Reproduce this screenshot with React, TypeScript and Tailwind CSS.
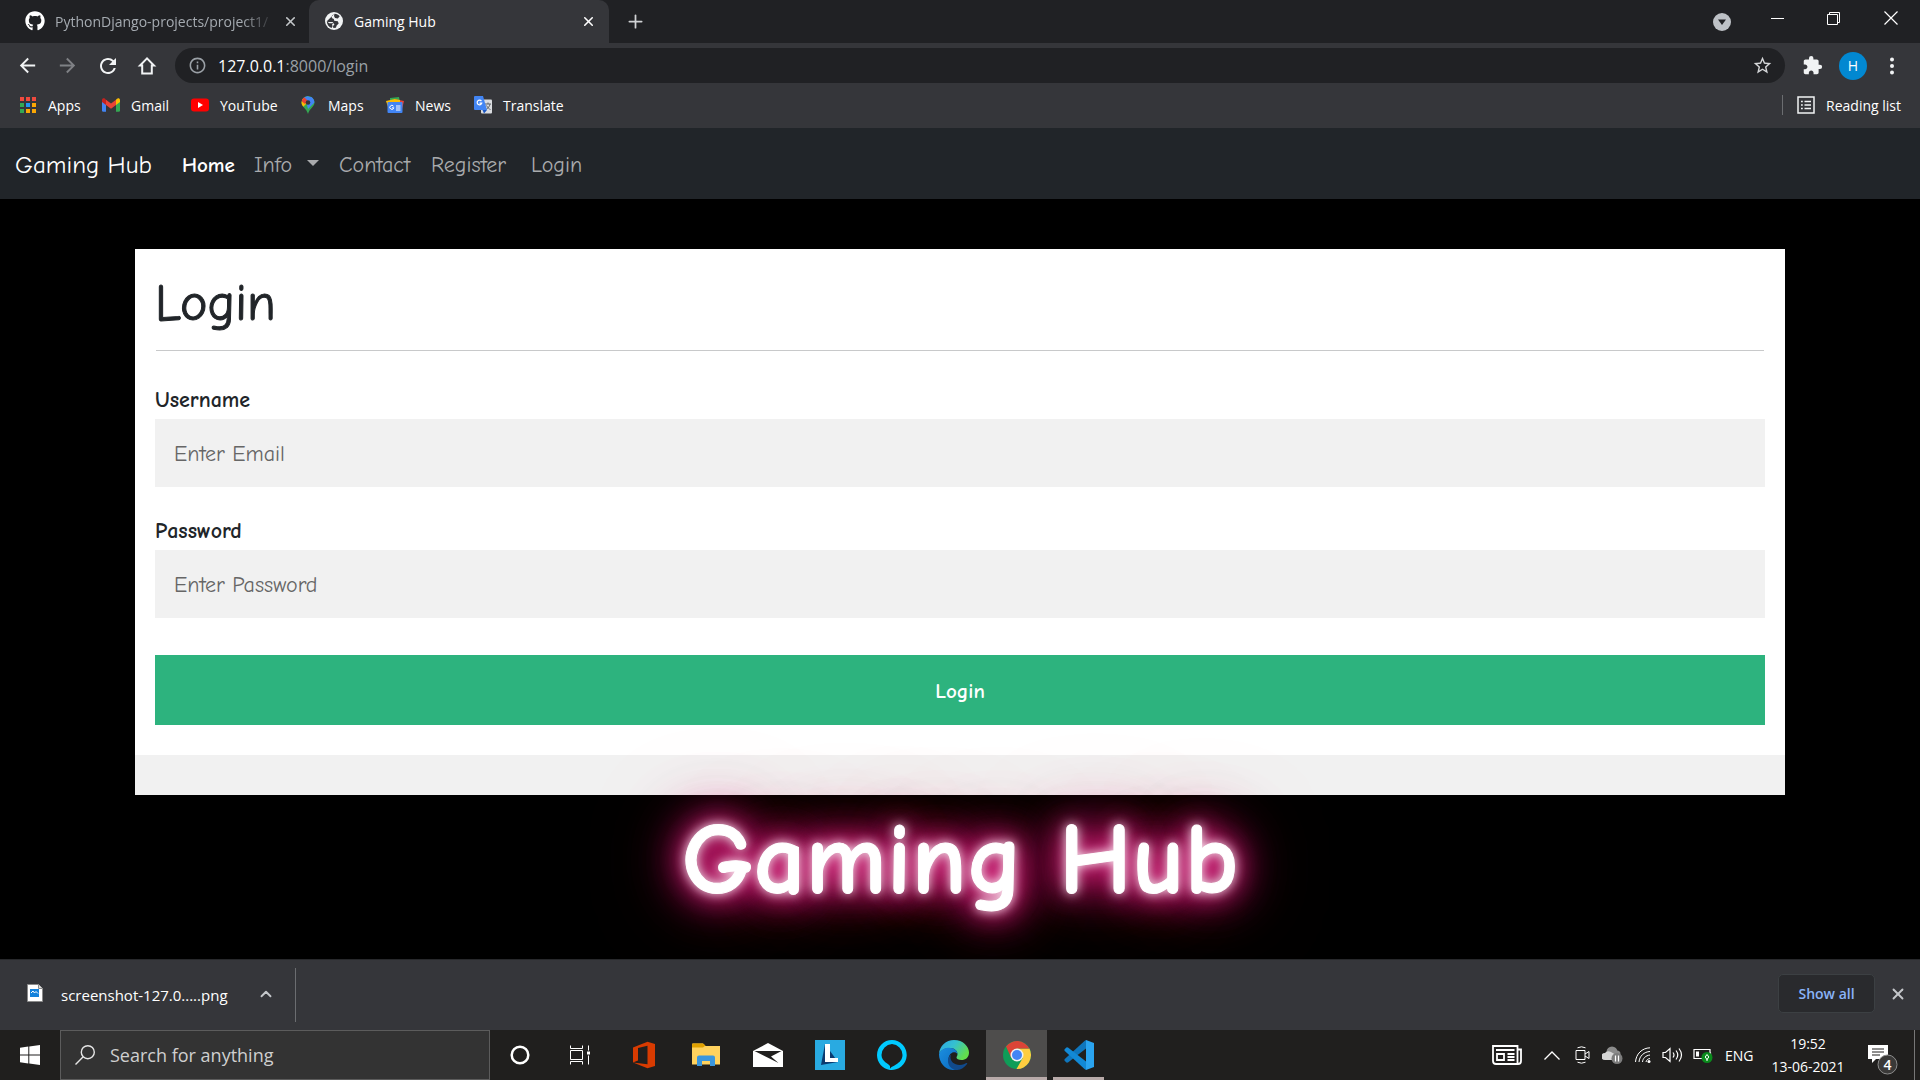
import React, { type ReactNode } from "react";
import { FaGithub } from "react-icons/fa";
import {
  MdArrowBack,
  MdArrowForward,
  MdExtension,
  MdInfoOutline,
  MdRefresh,
  MdStarBorder,
} from "react-icons/md";
import { ChevronUp, Plus, X } from "lucide-react";

const uiFont = "font-['Segoe_UI','Open_Sans','Noto_Sans',sans-serif]";
const siteFont = "font-['Comic_Neue',Lato,sans-serif]";

function IconButton({ label, className, children }: { label: string; className?: string; children: ReactNode }) {
  return (
    <button type="button" aria-label={label} className={`flex shrink-0 items-center justify-center ${className ?? ""}`}>
      {children}
    </button>
  );
}

function GlobeIcon() {
  return (
    <svg viewBox="0 0 18 18" className="size-[18px]">
      <circle cx="9" cy="9" r="9" fill="#f1f3f4" />
      <path
        d="M9.500 1.800 7 3.500 6.800 6l2 1 .4 1.800 3.600.4.900 2.300-2 2-.8 2.200-2.600.4-.3-2 1.500-1.500-1.600-1.400-3.700.1L1.800 9.200C1.900 12.500 3.800 15 6.500 16l1-1.500-.4-2.200L9 11.500 7.500 10H3.300L1.800 9.200M9.500 1.800c2.300.1 4 1 5.200 2.500L12.800 6.500 10 6l-1-2z"
        fill="#35363a"
      />
    </svg>
  );
}

function TabStrip() {
  return (
    <header className="flex h-[43px] items-stretch bg-[#202124] text-[#9aa0a6]">
      <div className="flex w-[309px] items-center pb-px pl-[25px]">
        <FaGithub className="size-5 shrink-0 text-white" />
        <span className="ml-[10px] w-[220px] overflow-hidden whitespace-nowrap text-[14px] text-[#a5abb1] [mask-image:linear-gradient(to_right,black_85%,transparent)]">
          PythonDjango-projects/project1/
        </span>
        <IconButton label="Close tab" className="ml-[8px] text-[#c4c7ca]">
          <X size={15} strokeWidth={2.5} />
        </IconButton>
      </div>
      <div className="flex w-[300px] items-center rounded-t-[10px] bg-[#35363a] pb-px pl-4 text-white">
        <GlobeIcon />
        <span className="ml-[11px] flex-1 text-[14px]">Gaming Hub</span>
        <IconButton label="Close tab" className="mr-[13px]">
          <X size={15} strokeWidth={2.5} />
        </IconButton>
      </div>
      <IconButton label="New tab" className="ml-4 pb-px text-[#d0d2d4]">
        <Plus size={21} strokeWidth={2} />
      </IconButton>
      <div className="ml-auto flex items-center text-white">
        <IconButton label="Search tabs" className="mr-[18px]">
          <svg viewBox="0 0 18 18" className="size-[18px]">
            <circle cx="9" cy="9" r="9" fill="#bdc1c6" />
            <path d="M5 6.500h8L9 12z" fill="#202124" />
          </svg>
        </IconButton>
        <IconButton label="Minimise" className="h-9 w-[56px] self-start">
          <svg viewBox="0 0 13 13" className="size-[13px]"><path d="M0 6.500h13" stroke="currentColor" /></svg>
        </IconButton>
        <IconButton label="Restore" className="h-9 w-[57px] self-start">
          <svg viewBox="0 0 13 13" className="size-[13px]" fill="none" stroke="currentColor">
            <path d="M.5 2.500h10v10H.5zM2.500 2.500v-2h10v10h-2" />
          </svg>
        </IconButton>
        <IconButton label="Close window" className="h-9 w-[58px] self-start">
          <svg viewBox="0 0 14 14" className="size-[14px]" stroke="currentColor" strokeWidth="1.200">
            <path d="m.5.5 13 13m0-13-13 13" />
          </svg>
        </IconButton>
      </div>
    </header>
  );
}

function Toolbar() {
  return (
    <div className="flex h-[45px] items-center bg-[#35363a] pl-[7px] text-[#f1f3f4]">
      <IconButton label="Back" className="w-10"><MdArrowBack size={23} /></IconButton>
      <IconButton label="Forward" className="w-10 text-[#7f8185]"><MdArrowForward size={23} /></IconButton>
      <IconButton label="Reload" className="w-10 pl-px"><MdRefresh size={24} /></IconButton>
      <IconButton label="Home" className="w-10">
        <svg viewBox="0 0 20 20" className="size-5" fill="none" stroke="currentColor" strokeWidth="2">
          <path d="M10 2.400 3 9.500h2.200V17.500h9.600V9.500H17z" />
        </svg>
      </IconButton>
      <div className="ml-2 flex h-[35px] flex-1 items-center rounded-full bg-[#202124] pl-[13px] pr-[12px]">
        <MdInfoOutline size={19} className="text-[#9aa0a6]" />
        <div role="textbox" aria-label="Address" className="ml-[11px] flex-1 text-[16px] text-[#9aa0a6]">
          <span className="text-white">127.0.0.1</span>:8000/login
        </div>
        <IconButton label="Bookmark this page"><MdStarBorder size={21} className="text-[#d5d7d9]" /></IconButton>
      </div>
      <IconButton label="Extensions" className="ml-[17px]"><MdExtension size={21} /></IconButton>
      <IconButton label="Profile" className="ml-[16px] size-7 rounded-full bg-[#0288d1] text-[14px] text-white">H</IconButton>
      <IconButton label="Menu" className="mr-[18px] ml-[15px] w-5">
        <svg viewBox="0 0 4 18" className="h-[18px] w-1" fill="currentColor">
          <circle cx="2" cy="2.500" r="2" /><circle cx="2" cy="9" r="2" /><circle cx="2" cy="15.500" r="2" />
        </svg>
      </IconButton>
    </div>
  );
}

const appDots = ["#f04a3e", "#f04a3e", "#f04a3e", "#34a853", "#2196f3", "#fba704", "#34a853", "#fba704", "#fba704"];

const bookmarks: { label: string; width: string; icon: ReactNode }[] = [
  {
    label: "Apps",
    width: "w-[83px]",
    icon: (
      <svg viewBox="0 0 18 18" className="size-[18px]">
        {appDots.map((c, i) => (
          <rect key={i} x={1 + (i % 3) * 6} y={1 + Math.floor(i / 3) * 6} width="4" height="4" fill={c} />
        ))}
      </svg>
    ),
  },
  {
    label: "Gmail",
    width: "w-[89px]",
    icon: (
      <svg viewBox="0 0 18 18" className="size-[18px]">
        <path d="M0 4v10.500q0 1.300 1.300 1.300H4V8z" fill="#4285f4" />
        <path d="M18 4v10.500q0 1.300-1.300 1.300H14V8z" fill="#34a853" />
        <path d="M14 3.800V9l4-3V4.200c0-2-2-2.500-3-1.400z" fill="#fbbc04" />
        <path d="M0 4.200V6l4 3V3.800L3 2.800C1.800 1.900 0 2.400 0 4.200z" fill="#c5221f" />
        <path d="m4 3.700 5 3.800 5-3.800V9l-5 3.800L4 9z" fill="#ea4335" />
      </svg>
    ),
  },
  {
    label: "YouTube",
    width: "w-[108px]",
    icon: (
      <svg viewBox="0 0 18 18" className="size-[18px]">
        <rect y="2.500" width="18" height="13" rx="3" fill="#f00" />
        <path d="m7 6 5 3-5 3z" fill="#fff" />
      </svg>
    ),
  },
  {
    label: "Maps",
    width: "w-[87px]",
    icon: (
      <svg viewBox="0 0 18 18" className="size-[18px]">
        <defs>
          <clipPath id="pin"><path d="M9 0a6.500 6.500 0 0 0-6.500 6.500c0 4.500 4.800 5.500 6.500 11.500 1.700-6 6.500-7 6.500-11.500A6.500 6.500 0 0 0 9 0z" /></clipPath>
        </defs>
        <g clipPath="url(#pin)">
          <path d="M0 0h18v18H0z" fill="#34a853" />
          <path d="m9 6.500 4.500-5L8 0 4 2z" fill="#4285f4" />
          <path d="M12.500 0H18v4L9 13l-1-4z" fill="#4285f4" />
          <path d="M0 2h5l4 4-7 7H0z" fill="#fbbc04" />
          <path d="M0 0h4l5 5-3 3L1 4z" fill="#ea4335" />
        </g>
        <circle cx="9" cy="6.500" r="2.300" fill="#35363a" />
      </svg>
    ),
  },
  {
    label: "News",
    width: "w-[88px]",
    icon: (
      <svg viewBox="0 0 18 18" className="size-[18px]">
        <path d="m4 2 9-1 1 5H4z" fill="#34a853" />
        <path d="m0 5 9-2 1 6-8 2z" fill="#fbbc04" />
        <path d="m8 3 10 2-2 8-8-3z" fill="#ea4335" />
        <path d="m8 3 6 1v4H8z" fill="#fbbc04" />
        <rect x="1.500" y="6" width="15" height="11" rx="1" fill="#4285f4" />
        <path d="M7.500 10.200a2 2 0 1 0 .3 1.600H6M10 10h4.500M10 12h4.500M10 14h4.500" stroke="#fff" fill="none" />
      </svg>
    ),
  },
  {
    label: "Translate",
    width: "w-[100px]",
    icon: (
      <svg viewBox="0 0 18 18" className="size-[18px]">
        <rect x="7" y="3.500" width="11" height="14" rx="1" fill="#dadce0" />
        <path d="M11 8h6M14 6.500V8m2 0c-.5 2.500-2 4.500-4 5.500M12.500 9.500c1 2 2.500 3.500 4 4" stroke="#5f6368" fill="none" />
        <path d="M1 0h8l4 14H1q-1 0-1-1V1q0-1 1-1z" fill="#4285f4" />
        <path d="M8.500 14H13l-3 3.500z" fill="#1a56c4" />
        <path d="M7.400 5.200a2.300 2.300 0 1 0 .3 2H5.500" stroke="#fff" strokeWidth="1.200" fill="none" />
      </svg>
    ),
  },
];

function BookmarksBar() {
  return (
    <nav aria-label="Bookmarks" className="flex h-10 items-center bg-[#35363a] pb-[6px] pl-[19px] text-[14px] text-white">
      {bookmarks.map((b) => (
        <a key={b.label} href="#" className={`flex shrink-0 items-center gap-[11px] whitespace-nowrap ${b.width}`}>
          {b.icon}
          {b.label}
        </a>
      ))}
      <a href="#" className="mr-[19px] ml-auto flex items-center gap-[11px] whitespace-nowrap">
        <span className="mr-[3px] h-5 w-px bg-[#6b6d70]" />
        <svg viewBox="0 0 18 18" className="size-[18px]" fill="none" stroke="#f1f3f4" strokeWidth="1.500">
          <rect x="1" y="1" width="16" height="16" />
          <path d="M4 5.500h1.800M7.500 5.500H14M4 9h1.800M7.500 9H14M4 12.500h1.800M7.500 12.500H14" />
        </svg>
        Reading list
      </a>
    </nav>
  );
}

function SiteNav() {
  return (
    <nav aria-label="Site" className={`flex h-[71px] items-center bg-[#212529] pt-[3px] pl-[15px] text-[22px] leading-8 text-[#a9abad] ${siteFont}`}>
      <a href="#" className="w-[167px] text-[25px] whitespace-nowrap text-white">Gaming Hub</a>
      <a href="#" className="w-[72px] text-[21px] font-bold text-white">Home</a>
      <button type="button" className="flex w-[85px] items-center gap-[15px]">
        Info
        <svg viewBox="0 0 12 6" className="mb-1 h-[6px] w-3" fill="currentColor"><path d="M0 0h12L6 6z" /></svg>
      </button>
      <a href="#" className="w-[92px]">Contact</a>
      <a href="#" className="w-[100px]">Register</a>
      <a href="#">Login</a>
    </nav>
  );
}

function Field({ id, label, type, placeholder }: { id: string; label: string; type: string; placeholder: string }) {
  return (
    <div className="mb-7 flex flex-col">
      <label htmlFor={id} className="mb-[3px] text-[22px] leading-8 font-bold">{label}</label>
      <input
        id={id}
        type={type}
        placeholder={placeholder}
        className="h-[68px] w-full bg-[#f1f1f1] px-[19px] pt-[2px] text-[22px] outline-none placeholder:text-[#666]"
      />
    </div>
  );
}

function LoginPage() {
  return (
    <main className={`flex flex-1 flex-col overflow-hidden bg-black pt-[50px] text-[#212529] ${siteFont}`}>
      <form className="mx-[135px] bg-white" onSubmit={(e) => e.preventDefault()}>
        <div className="px-5 pt-6 pb-[30px]">
          <h1 className="text-[52px] leading-[60px] [-webkit-text-stroke:1px_#212529]">Login</h1>
          <hr className="mx-px mt-[17px] mb-[33px] border-[#c8c9ca]" />
          <Field id="username" label="Username" type="text" placeholder="Enter Email" />
          <Field id="password" label="Password" type="password" placeholder="Enter Password" />
          <button type="submit" className="mt-[9px] h-[70px] w-full bg-[#2db37e] pt-1 text-[21px] font-bold text-white">Login</button>
        </div>
        <div className="h-10 bg-[#f1f1f1]" />
      </form>
      <h2 className="relative text-center text-[102px] leading-[130px] font-bold whitespace-nowrap text-white [-webkit-text-stroke:1px_#fff] [text-shadow:0_0_12px_#fff,0_0_26px_#ff4da6,0_0_38px_#e60073,0_0_50px_#e60073b0,0_0_66px_#e60073b0,0_0_90px_#e60073a0]">
        Gaming Hub
      </h2>
    </main>
  );
}

function DownloadShelf() {
  return (
    <aside aria-label="Downloads" className="relative flex h-[71px] items-center border-t border-[#28292c] bg-[#35363a] text-white">
      <button type="button" className="flex items-center pl-[27px] text-[15px]">
        <svg viewBox="0 0 16 18" className="mb-1 h-[18px] w-4">
          <path d="M.5.500h11l4 4v13H.500z" fill="#fff" stroke="#8a8a8a" />
          <path d="M11.500.500v4h4" fill="#ddd" stroke="#8a8a8a" />
          <rect x="3" y="5" width="9" height="8" fill="#1482dc" />
          <path d="m4 9 2-2 1.500 2L9 7.500l2 2" stroke="#fff" fill="none" />
        </svg>
        <span className="ml-[18px] w-[178px] text-left whitespace-nowrap">screenshot-127.0.....png</span>
      </button>
      <IconButton label="Download options" className="ml-[18px] pb-[2px] text-[#c4c7ca]"><ChevronUp size={18} strokeWidth={2.5} /></IconButton>
      <span className="ml-[20px] h-[54px] w-px bg-[#6b6d70]" />
      <button type="button" className="mb-[3px] ml-auto h-[39px] w-[97px] rounded-[5px] border border-[#3c4043] bg-[#292a2d] text-[14px] font-semibold text-[#8ab4f8]">
        Show all
      </button>
      <IconButton label="Close downloads" className="mr-[13px] mb-[3px] ml-[14px] text-[#c4c7ca]"><X size={18} strokeWidth={2.5} /></IconButton>
    </aside>
  );
}

const taskbarApps: { label: string; cell: string; icon: ReactNode }[] = [
  {
    label: "Cortana",
    cell: "w-[62px] pr-[2px]",
    icon: <svg viewBox="0 0 20 20" className="size-5"><circle cx="10" cy="10" r="8.300" fill="none" stroke="#fff" strokeWidth="2.500" /></svg>,
  },
  {
    label: "Task View",
    cell: "w-[62px] pr-[6px]",
    icon: (
      <svg viewBox="0 0 20 20" className="size-5" fill="none" stroke="#fff">
        <path d="M.5.500v3h12v-3M.5 19.500v-3h12v3M.5 5.500h12v9H.5zM18.500.500v5M18.500 10.500v9" />
        <path d="M17 6.500h3v3h-3z" fill="#fff" stroke="none" />
      </svg>
    ),
  },
  {
    label: "Office",
    cell: "w-[62px] pr-[2px]",
    icon: (
      <svg viewBox="0 0 24 28" className="h-7 w-6">
        <path d="M1 21.500V6.500L15.500.800 23 3v22l-7.500 2.200L1 21.500l14.500 1.800V4.800L6 7v12.500z" fill="#d83b01" />
      </svg>
    ),
  },
  {
    label: "File Explorer",
    cell: "w-[62px] pr-[2px]",
    icon: (
      <svg viewBox="0 0 28 24" className="h-6 w-7">
        <path d="M0 1.500Q0 .500 1 .500h10l2.500 2.500H28v18.500H0z" fill="#ffd25e" />
        <path d="M0 1.500Q0 .500 1 .500h10l2.500 2-2.500 2H0z" fill="#e0a100" />
        <path d="M5 23V14.500Q5 12.500 7 12.500h14q2 0 2 2V23h-5v-5h-8v5z" fill="#3a96dd" />
      </svg>
    ),
  },
  {
    label: "Mail",
    cell: "w-[62px] pr-[2px]",
    icon: (
      <svg viewBox="0 0 30 24" className="h-6 w-[30px]">
        <path d="M0 8 15 0l15 8v16H0z" fill="#fff" />
        <path d="M1.500 8h27L18 13.500l7.500 6.500z" fill="#201f1e" />
      </svg>
    ),
  },
  {
    label: "L",
    cell: "w-[62px] pr-[2px]",
    icon: (
      <svg viewBox="0 0 30 30" className="size-[30px]">
        <path d="M0 0h30v30H0z" fill="#29aae1" />
        <path d="m10 4-4 21 17-3z" fill="#0b3a6f" />
        <path d="M10 4h5v14h8v4H10z" fill="#fff" />
      </svg>
    ),
  },
  {
    label: "Alexa",
    cell: "w-[62px] pr-[2px]",
    icon: (
      <svg viewBox="0 0 30 30" className="size-[30px]">
        <path fillRule="evenodd" d="M15 0a15 15 0 1 1-2 29.900C5.500 28.800 0 22.600 0 15A15 15 0 0 1 15 0zm0 4A11 11 0 0 0 4.500 15c0 6.500 7.500 9 8.500 11v3c.5-3 12.500-5 12.500-14A11 11 0 0 0 15 4z" fill="#00caff" />
      </svg>
    ),
  },
  {
    label: "Edge",
    cell: "w-[62px] pr-[2px]",
    icon: (
      <svg viewBox="0 0 30 30" className="size-[30px]">
        <defs>
          <linearGradient id="edgeTop" x1="0" y1="0" x2="1" y2=".5">
            <stop offset="0" stopColor="#2aa5e8" /><stop offset=".5" stopColor="#35c1cf" /><stop offset="1" stopColor="#62de4c" />
          </linearGradient>
          <linearGradient id="edgeLeft" x1="0" y1="0" x2="1" y2="1">
            <stop offset="0" stopColor="#1b8fe0" /><stop offset="1" stopColor="#0b68bd" />
          </linearGradient>
        </defs>
        <path d="M0 14C.5 6 7 0 15 0c9 0 15 6.500 15 12.500 0 5-3.500 7.500-7.500 7.500-3 0-5-1.300-5-2.500 0-1 1-1.500 1-3.500 0-3-3-6-7.500-6C6 8 2 10 0 14z" fill="url(#edgeTop)" />
        <path d="M0 14c2-4.500 6-6.200 10-6.200 5 0 8.500 3 8.500 6.200-1-1.300-2.300-2-4-1.700-4.500 1-6.500 7-3.500 12 1.500 2.700 3.500 4.200 6 5.500C8 31.500 0 24 0 14z" fill="url(#edgeLeft)" />
        <path d="M12 14.500c-2 5.500 2 10.500 8.500 10.500 3.500 0 5.500-1.500 7-2 .5-.2 1 .3.600.900C25 28 20.500 30.500 16 30c-7-2-9.500-10.500-4-15.500z" fill="#114a8b" />
      </svg>
    ),
  },
  {
    label: "Chrome",
    cell: "w-[61px] bg-[#4e4d4c] border-b-[3px] border-[#b8aaa9] pt-[3px]",
    icon: (
      <svg viewBox="0 0 28 28" className="size-7">
        <circle cx="14" cy="14" r="14" fill="#0f9d58" />
        <path d="M14 7.500h12.400A14 14 0 0 1 13.500 28l6.100-10.800z" fill="#ffcd40" />
        <path d="M14 7.500h12.400A14 14 0 0 0 3 5.400l5.400 11.800z" fill="#db4437" />
        <circle cx="14" cy="14" r="6.500" fill="#f1f1f1" />
        <circle cx="14" cy="14" r="5" fill="#4285f4" />
      </svg>
    ),
  },
  {
    label: "Visual Studio Code",
    cell: "mx-[6px] w-[51px] border-b-[3px] border-[#b8aaa9] pt-[3px]",
    icon: (
      <svg viewBox="0 0 30 30" className="size-[30px]">
        <path d="M22 0 30 3v24l-8 3z" fill="#2aa4f0" />
        <path d="m22 8.500-18 14-1.200.200L.500 20.800v-1.600L20.500 1 22 0z" fill="#0f76bd" />
        <path d="m22 21.500-18-14-1.200-.200L.500 9.200v1.600L20.500 29l1.500 1z" fill="#1289d6" />
      </svg>
    ),
  },
];

function Tray() {
  return (
    <div className="ml-auto flex items-center text-white">
      <IconButton label="News and interests" className="w-[30px]">
        <svg viewBox="0 0 30 20" className="h-5 w-[30px]" fill="none" stroke="#fff" strokeWidth="1.800">
          <path d="M1 1h24.500v18H4q-3 0-3-3zM25.500 4.500H29V16q0 3-3 3h-2M4 5h18.500M15.500 9h7M15.500 12h7M15.500 15h7M5 9h7v6H5z" />
        </svg>
      </IconButton>
      <IconButton label="Show hidden icons" className="ml-[22px] w-4">
        <svg viewBox="0 0 16 9" className="h-[9px] w-4" fill="none" stroke="#fff" strokeWidth="1.300"><path d="m.5 8.500 7.500-7.500 7.500 7.500" /></svg>
      </IconButton>
      <IconButton label="Meet now" className="ml-[15px] w-[15px]">
        <svg viewBox="0 0 15 18" className="h-[18px] w-[15px]" fill="none" stroke="#fff">
          <path d="M1 4.500h9v9H1zM10 8l4-2.500v7L10 10M2.500 1.800q4-2 8 0M2.500 16.200q4 2 8 0" />
        </svg>
      </IconButton>
      <IconButton label="OneDrive" className="ml-[12px] w-[21px]">
        <svg viewBox="0 0 21 18" className="h-[18px] w-[21px]">
          <circle cx="10" cy="6" r="5.500" fill="#8b8b8b" /><circle cx="15" cy="8" r="3.500" fill="#8b8b8b" />
          <path d="M3 14a3.500 3.500 0 0 1 0-7q2-3 6-1l5 3v5z" fill="#d5d5d5" />
          <circle cx="15" cy="12.500" r="5.500" fill="#7c7c7c" /><path d="M13.500 9.500v6M16.500 9.500v6" stroke="#fff" strokeWidth="1.200" />
        </svg>
      </IconButton>
      <IconButton label="Network" className="ml-[12px] w-4">
        <svg viewBox="0 0 16 16" className="size-4" fill="none" stroke="#fff">
          <path d="M.5 15C1 7 7 1 15 .800M4 15C4.500 9 9 4.800 15 4.500M7.500 15c.3-3.500 3-6.500 7.500-7M11 15c.3-2 2-3.300 4-3.500" />
          <circle cx="14" cy="14.500" r="1.500" fill="#fff" stroke="none" />
        </svg>
      </IconButton>
      <IconButton label="Volume" className="ml-[11px] w-[21px]">
        <svg viewBox="0 0 21 18" className="h-[18px] w-[21px]" fill="none" stroke="#fff" strokeWidth="1.200">
          <path d="M1 6.500h2.500L8 2.500v13l-4.500-4H1zM11 6.500q2 2.500 0 5M14 4.500q3.500 4.500 0 9M17 2.500q5 6.500 0 13" />
        </svg>
      </IconButton>
      <IconButton label="Battery" className="ml-[10px] w-[20px]">
        <svg viewBox="0 0 20 16" className="h-4 w-5">
          <path d="M1 2.500h16v9H1zM17.500 5.500v3" fill="none" stroke="#fff" strokeWidth="1.200" /><path d="M3 4.500h3v5H3z" fill="#fff" />
          <circle cx="14" cy="10.500" r="5.500" fill="#0a8a1c" />
          <path d="m14 7.500 1.800 2.500-1.800 2.500-1.800-2.500zM14 12v2" fill="none" stroke="#fff" />
        </svg>
      </IconButton>
      <span className="ml-[12px] w-[30px] text-[14px]">ENG</span>
      <time className="ml-[9px] flex w-[88px] flex-col items-center text-[14px] leading-[23px] whitespace-nowrap">
        <span>19:52</span>
        <span>13-06-2021</span>
      </time>
      <IconButton label="Notifications" className="ml-[15px] w-[31px] pt-2">
        <svg viewBox="0 0 31 31" className="size-[31px]">
          <path d="M1 1h20v14H9l-4 4v-4H1z" fill="#fff" />
          <path d="M5 5h12M5 8h12M5 11h8" stroke="#201f1e" />
          <circle cx="20.500" cy="20.500" r="9.500" fill="#3a3938" stroke="#8c8c8c" />
          <text x="20.500" y="25.500" textAnchor="middle" fontSize="14" fontWeight="600" fill="#fff">4</text>
        </svg>
      </IconButton>
      <span className="mr-[5px] ml-[16px] h-[50px] w-px bg-[#777]" />
    </div>
  );
}

function Taskbar() {
  return (
    <footer className="flex h-[50px] items-stretch bg-[#201f1e]">
      <IconButton label="Start" className="w-[60px]">
        <svg viewBox="0 0 20 20" className="size-5" fill="#fff">
          <path d="M0 2.800 8.300 1.600v7.900H0zM9.300 1.500 20 0v9.500H9.300zM0 10.500h8.300v7.900L0 17.200zM9.300 10.500H20V20L9.300 18.500z" />
        </svg>
      </IconButton>
      <div className="flex w-[430px] items-center border border-[#5c5c5c] bg-[#333] pl-[14px]">
        <svg viewBox="0 0 20 20" className="size-5" fill="none" stroke="#e6e6e6" strokeWidth="1.400">
          <circle cx="12.800" cy="7.200" r="6.500" /><path d="M8.200 11.800.500 19.500" />
        </svg>
        <input
          type="text"
          aria-label="Search"
          placeholder="Search for anything"
          className="ml-[15px] min-w-0 flex-1 bg-transparent text-[18px] outline-none placeholder:text-[#cfcfcf]"
        />
      </div>
      <div className="flex items-stretch">
        {taskbarApps.map((a) => (
          <IconButton key={a.label} label={a.label} className={a.cell}>
            {a.icon}
          </IconButton>
        ))}
      </div>
      <Tray />
    </footer>
  );
}

export default function App() {
  return (
    <div className={`flex min-h-screen flex-col bg-black ${uiFont}`}>
      <TabStrip />
      <Toolbar />
      <BookmarksBar />
      <SiteNav />
      <LoginPage />
      <DownloadShelf />
      <Taskbar />
    </div>
  );
}
